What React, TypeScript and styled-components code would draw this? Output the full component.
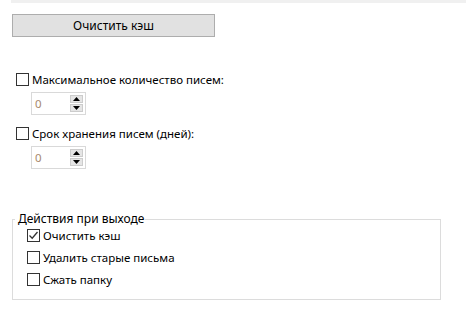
import * as React from "react";
import styled, { createGlobalStyle } from "styled-components";

const GlobalStyle = createGlobalStyle`
  body {
    margin: 0;
    background: #ffffff;
    font-family: "Noto Sans", "Open Sans", sans-serif;
    font-size: 11.5px;
    color: #000000;
  }
`;

const Page = styled.div`
  width: 466px;
  height: 325px;
  overflow: hidden;
`;

const TopStrip = styled.div`
  margin-left: 11px;
  height: 3px;
  background: #f0f0f0;
`;

const Content = styled.div`
  display: flex;
  flex-direction: column;
  padding: 11px 25px 0 12px;
`;

const Button = styled.button`
  width: 203px;
  height: 23px;
  padding: 0;
  background: #e1e1e1;
  border: 1px solid #adadad;
  font-family: inherit;
  font-size: 12px;
  color: #000;
`;

const Section = styled.div<{ $top: number }>`
  display: flex;
  flex-direction: column;
  gap: 5px;
  margin-top: ${p => p.$top}px;
`;

const CheckRow = styled.label<{ $indent?: number }>`
  display: flex;
  align-items: center;
  gap: 3px;
  height: 15px;
  margin-left: ${p => p.$indent ?? 4}px;
  line-height: 15px;
  white-space: nowrap;
`;

const Box = styled.span`
  box-sizing: border-box;
  width: 13px;
  height: 13px;
  border: 1px solid #333333;
  background: #ffffff;
  display: flex;
  align-items: center;
  justify-content: center;
`;

const Spinner = styled.div`
  box-sizing: border-box;
  margin-left: 19px;
  width: 55px;
  height: 23px;
  border: 1px solid #d9d9d9;
  display: flex;
  align-items: center;
  padding: 0 2px 0 3px;
`;

const SpinValue = styled.span`
  flex: 1;
  color: #a8896c;
`;

const Arrows = styled.div`
  display: flex;
  flex-direction: column;
  gap: 1px;
`;

const ArrowBtn = styled.div`
  width: 13px;
  height: 8px;
  background: #e5e5e5;
  border: 1px solid #cccccc;
  box-sizing: border-box;
  display: flex;
  align-items: center;
  justify-content: center;
`;

const Group = styled.fieldset`
  margin: 43px 0 0 0;
  padding: 2px 0 0 14px;
  width: 429px;
  height: 88px;
  box-sizing: border-box;
  border: 1px solid #dcdcdc;
  display: flex;
  flex-direction: column;
  gap: 7px;
`;

const Legend = styled.legend`
  padding: 0 1px 0 3px;
  margin-left: -12px;
  line-height: 14px;
  font-size: 12px;
`;

const Check = ({ checked }: { checked?: boolean }) => (
  <Box>
    {checked && (
      <svg width="11" height="11" viewBox="0 0 11 11">
        <path d="M1.5 5.5 L4.2 8.2 L9.5 2" fill="none" stroke="#333" strokeWidth="1.3" />
      </svg>
    )}
  </Box>
);

const Arrow = ({ up }: { up?: boolean }) => (
  <svg width="7" height="4" viewBox="0 0 7 4">
    <path d={up ? "M0 4 L3.5 0 L7 4 Z" : "M0 0 L3.5 4 L7 0 Z"} fill="#000" />
  </svg>
);

const NumberBox = () => (
  <Spinner>
    <SpinValue>0</SpinValue>
    <Arrows>
      <ArrowBtn>
        <Arrow up />
      </ArrowBtn>
      <ArrowBtn>
        <Arrow />
      </ArrowBtn>
    </Arrows>
  </Spinner>
);

export default function App() {
  return (
    <Page>
      <GlobalStyle />
      <TopStrip />
      <Content>
        <Button>Очистить кэш</Button>
        <Section $top={35}>
          <CheckRow>
            <Check />
            Максимальное количество писем:
          </CheckRow>
          <NumberBox />
        </Section>
        <Section $top={11}>
          <CheckRow>
            <Check />
            Срок хранения писем (дней):
          </CheckRow>
          <NumberBox />
        </Section>
        <Group>
          <Legend>Действия при выходе</Legend>
          <CheckRow $indent={0}>
            <Check checked />
            Очистить кэш
          </CheckRow>
          <CheckRow $indent={0}>
            <Check />
            Удалить старые письма
          </CheckRow>
          <CheckRow $indent={0}>
            <Check />
            Сжать папку
          </CheckRow>
        </Group>
      </Content>
    </Page>
  );
}
